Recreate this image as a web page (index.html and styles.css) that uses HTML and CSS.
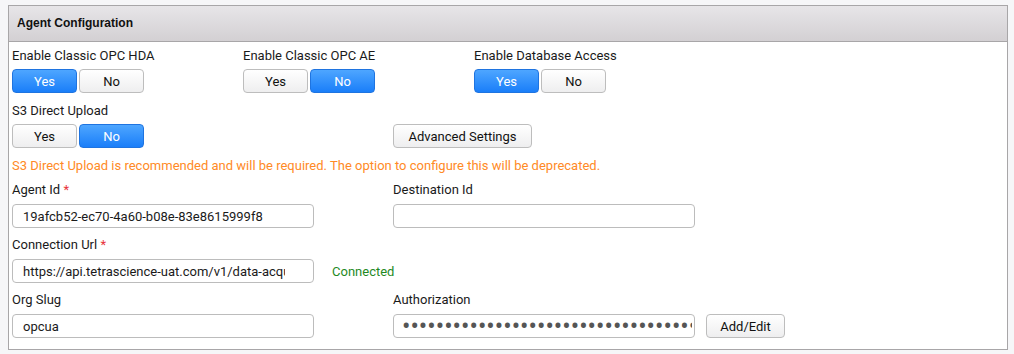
FILE: index.html
```html
<!DOCTYPE html>
<html lang="en">
<head>
    <meta charset="UTF-8">
    <title>Agent Configuration</title>
    <link rel="stylesheet" href="styles.css">
</head>
<body>
    <div class="panel">
        <div class="panel-header">Agent Configuration</div>
        <div class="panel-body">
            <div class="row">
                <div class="field field-toggle col-third">
                    <div class="label">Enable Classic OPC HDA</div>
                    <div class="toggle">
                        <button class="btn active">Yes</button>
                        <button class="btn">No</button>
                    </div>
                </div>
                <div class="field field-toggle col-third">
                    <div class="label">Enable Classic OPC AE</div>
                    <div class="toggle">
                        <button class="btn">Yes</button>
                        <button class="btn active">No</button>
                    </div>
                </div>
                <div class="field field-toggle col-third">
                    <div class="label">Enable Database Access</div>
                    <div class="toggle">
                        <button class="btn active">Yes</button>
                        <button class="btn">No</button>
                    </div>
                </div>
            </div>

            <div class="row">
                <div class="field field-toggle col-half">
                    <div class="label">S3 Direct Upload</div>
                    <div class="toggle">
                        <button class="btn">Yes</button>
                        <button class="btn active">No</button>
                    </div>
                </div>
                <div class="field field-toggle col-half field-bottom">
                    <button class="btn btn-wide">Advanced Settings</button>
                </div>
            </div>

            <div class="warning">S3 Direct Upload is recommended and will be required. The option to configure this will be deprecated.</div>

            <div class="row">
                <div class="field col-half">
                    <div class="label">Agent Id <span class="req">*</span></div>
                    <div class="control">
                        <input class="input" type="text" value="19afcb52-ec70-4a60-b08e-83e8615999f8">
                    </div>
                </div>
                <div class="field col-half">
                    <div class="label">Destination Id</div>
                    <div class="control">
                        <input class="input" type="text" value="">
                    </div>
                </div>
            </div>

            <div class="row">
                <div class="field col-half">
                    <div class="label">Connection Url <span class="req">*</span></div>
                    <div class="control">
                        <input class="input input-url" type="text" value="https://api.tetrascience-uat.com/v1/data-acquisition/agent">
                        <span class="status-ok">Connected</span>
                    </div>
                </div>
            </div>

            <div class="row">
                <div class="field col-half">
                    <div class="label">Org Slug</div>
                    <div class="control">
                        <input class="input" type="text" value="opcua">
                    </div>
                </div>
                <div class="field col-half">
                    <div class="label">Authorization</div>
                    <div class="control">
                        <input class="input input-secret" type="password" value="abcdefghijklmnopqrstuvwxyzabcdefghijklmnopqrstuvwxyz">
                        <button class="btn btn-small">Add/Edit</button>
                    </div>
                </div>
            </div>
        </div>
    </div>
</body>
</html>
```

FILE: styles.css
```css
body {
    margin: 0;
    padding: 5px 0 0 8px;
    background: #f6f6f8;
    font-family: Roboto, 'Liberation Sans', sans-serif;
    font-size: 13px;
    color: #1a1a1a;
}

.panel {
    width: 1000px;
    height: 345px;
    box-sizing: border-box;
    border: 1px solid #a8a6a8;
    background: #fff;
}

.panel-header {
    height: 36px;
    box-sizing: border-box;
    padding: 0 8px;
    line-height: 35px;
    background: linear-gradient(#e7e5e8, #d3d0d3);
    border-bottom: 1px solid #a8a6a8;
    font-family: 'Liberation Sans', Arial, sans-serif;
    font-weight: bold;
    font-size: 12px;
    color: #111;
}

.panel-body {
    padding: 3px 3px 0 3px;
}

.row {
    display: flex;
}

.field {
    flex: none;
    margin-bottom: 6px;
}

.field-toggle {
    margin-bottom: 7px;
}

.col-third {
    width: 231px;
}

.col-half {
    width: 381px;
}

.field-bottom {
    display: flex;
    align-items: flex-end;
}

.label {
    line-height: 18px;
    padding-top: 2px;
    margin-bottom: 5px;
    white-space: nowrap;
}

.req {
    color: #e8333a;
}

.toggle {
    display: flex;
    gap: 2px;
    margin-top: -1px;
}

.btn {
    flex: none;
    height: 24px;
    box-sizing: border-box;
    padding: 0 12px;
    border: 1px solid #bdbdbd;
    border-radius: 4px;
    background: linear-gradient(#ffffff, #eeeeef);
    font-family: Roboto, 'Liberation Sans', sans-serif;
    font-size: 13px;
    color: #111;
    cursor: pointer;
}

.toggle .btn {
    width: 65px;
}

.btn.active {
    background: linear-gradient(#4ea6ff, #1a7ef9);
    border-color: #1f74e0;
    color: #fff;
}

.btn-wide {
    width: 139px;
}

.btn-small {
    width: 79px;
    margin-left: 11px;
}

.warning {
    color: #ff8a26;
    line-height: 18px;
    margin: 2px 0 4px;
}

.control {
    display: flex;
    align-items: center;
}

.input {
    flex: none;
    width: 302px;
    height: 24px;
    box-sizing: border-box;
    padding: 0 10px;
    border: 1px solid #bcbcbc;
    border-radius: 4px;
    background: #fff;
    font-family: Roboto, 'Liberation Sans', sans-serif;
    font-size: 13px;
    color: #1a1a1a;
    outline: none;
}

.input-url {
    padding-right: 28px;
}

.input-secret {
    padding: 0 2px 0 8px;
    font-size: 25px;
    line-height: 22px;
    color: #555;
}

.status-ok {
    margin-left: 18px;
    color: #1f8a1f;
}
```
